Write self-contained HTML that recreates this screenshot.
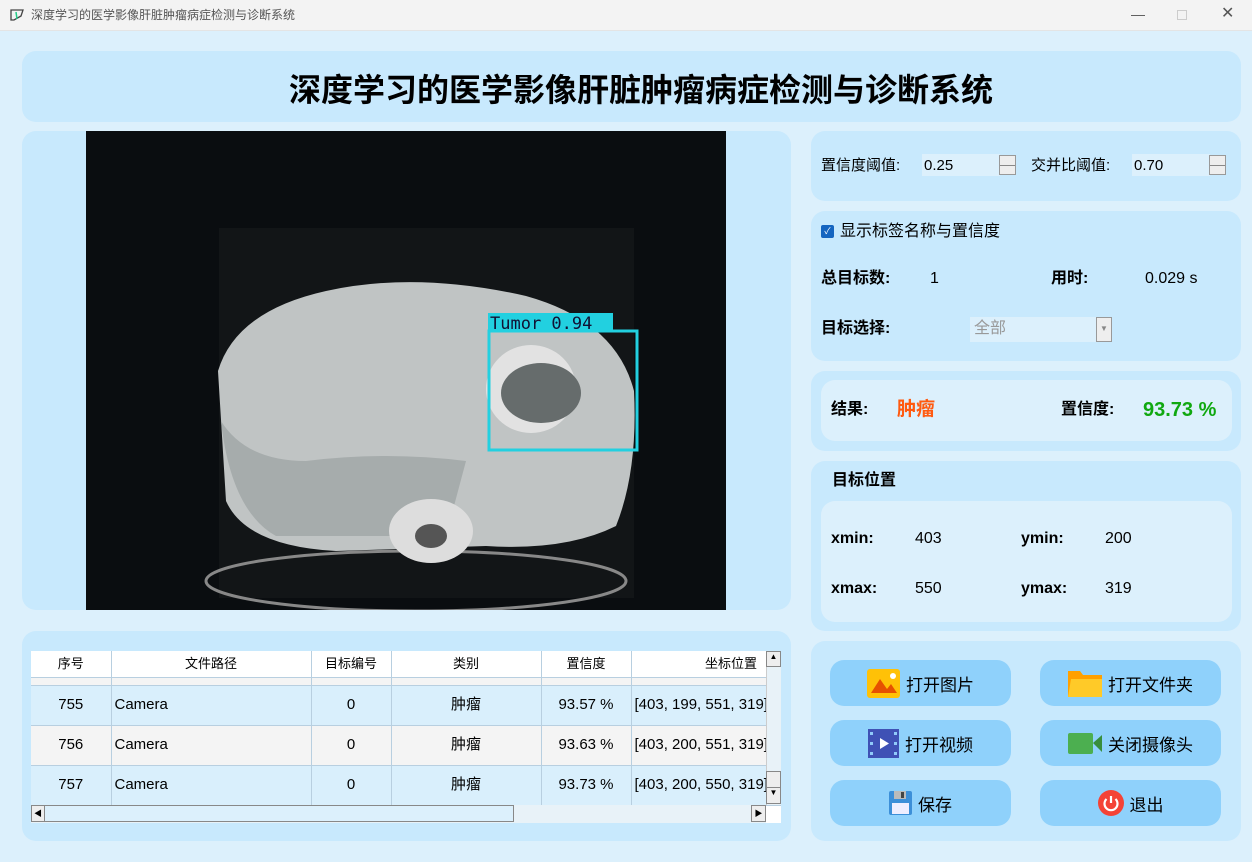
<!DOCTYPE html>
<html><head><meta charset="utf-8"><style>
*{margin:0;padding:0;box-sizing:border-box}
body{width:1252px;height:862px;background:#dcf0fc;font-family:"Liberation Sans","Noto Sans CJK SC",sans-serif;position:relative;overflow:hidden;color:#000}
.a{position:absolute}
.p{position:absolute;background:#c8e9fd;border-radius:14px}
.t{position:absolute;white-space:nowrap;line-height:20px;height:20px}
.b{font-weight:bold}
.btn{position:absolute;width:181px;height:46px;background:#8fd1fb;border-radius:14px;font-size:17px;display:flex;align-items:center;justify-content:center;gap:6px}
.spin{position:absolute;width:17px;height:20px;background:#eee;border:1px solid #999}
.spin:before{content:"";position:absolute;left:0;right:0;top:9px;border-top:1px solid #888}
td,th{border-right:1px solid #b8cfe0;border-bottom:1px solid #b8cfe0;font-size:15px;font-weight:normal;text-align:center;line-height:18px}
</style></head><body>
<div class="a" style="left:0;top:0;width:1252px;height:31px;background:#f3f3f3;border-bottom:1px solid #e4e4e4"></div>
<svg class="a" style="left:9px;top:8px" width="16" height="14"><path d="M2 2 L14 2 L12 8 L5 12 L2 12 Z" fill="none" stroke="#444" stroke-width="1.3"/><path d="M7 4 L8 11" stroke="#2c8" stroke-width="1.5"/></svg>
<div class="t" style="left:31px;top:5px;font-size:12px;color:#555">深度学习的医学影像肝脏肿瘤病症检测与诊断系统</div>
<div class="t" style="left:1131px;top:4px;font-size:14px;color:#555">—</div>
<div class="a" style="left:1177px;top:10px;width:10px;height:10px;border:1px solid #ccc"></div>
<div class="t" style="left:1221px;top:4px;font-size:16px;color:#555">✕</div>

<div class="p" style="left:22px;top:51px;width:1219px;height:71px"></div>
<div class="t b" style="left:0;width:1282px;text-align:center;top:70px;height:40px;line-height:40px;font-size:32px">深度学习的医学影像肝脏肿瘤病症检测与诊断系统</div>

<div class="p" style="left:22px;top:131px;width:769px;height:479px"></div>
<div class="a" style="left:86px;top:131px;width:640px;height:479px;background:#0a0d10;overflow:hidden">
<svg width="640" height="479">
<rect x="133" y="97" width="415" height="370" fill="#121517"/>
<ellipse cx="330" cy="450" rx="210" ry="30" fill="none" stroke="#888" stroke-width="3"/>
<path d="M132 240 Q150 180 240 160 Q330 140 440 165 Q530 190 548 260 Q552 340 530 395 Q480 420 400 415 L250 420 Q160 415 140 370 Z" fill="#c0c4c4"/>
<path d="M135 290 Q160 330 220 330 Q300 320 380 330 L360 405 L190 405 Q145 380 135 290Z" fill="#a6acac"/>
<ellipse cx="445" cy="258" rx="45" ry="44" fill="#e2e2e2"/>
<ellipse cx="455" cy="262" rx="40" ry="30" fill="#666c6c"/>
<ellipse cx="345" cy="400" rx="42" ry="32" fill="#ddd"/>
<ellipse cx="345" cy="405" rx="16" ry="12" fill="#555"/>
<rect x="403" y="200" width="148" height="119" fill="none" stroke="#22d0e0" stroke-width="3"/>
<rect x="402" y="182" width="125" height="19" fill="#22d0e0"/>
<text x="404" y="198" font-family="DejaVu Sans Mono,monospace" font-size="17" fill="#113">Tumor 0.94</text>
</svg></div>

<div class="p" style="left:22px;top:631px;width:769px;height:210px"></div>
<div class="a" style="left:31px;top:651px;width:750px;height:172px;background:#fff;overflow:hidden">
<table style="border-collapse:collapse;width:800px;table-layout:fixed">
<tr style="height:26px;background:#fff"><th style="width:80px;font-size:13px">序号</th><th style="width:200px;font-size:13px">文件路径</th><th style="width:80px;font-size:13px">目标编号</th><th style="width:150px;font-size:13px">类别</th><th style="width:90px;font-size:13px">置信度</th><th style="font-size:13px;border-right:none">坐标位置</th></tr>
<tr style="height:8px;background:#f4f4f4"><td></td><td></td><td></td><td></td><td></td><td></td></tr>
<tr style="height:40px;background:#d9effc"><td>755</td><td style="text-align:left;padding-left:3px">Camera</td><td>0</td><td>肿瘤</td><td>93.57 %</td><td style="text-align:left;padding-left:3px">[403, 199, 551, 319]</td></tr>
<tr style="height:40px;background:#f4f4f4"><td>756</td><td style="text-align:left;padding-left:3px">Camera</td><td>0</td><td>肿瘤</td><td>93.63 %</td><td style="text-align:left;padding-left:3px">[403, 200, 551, 319]</td></tr>
<tr style="height:40px;background:#d9effc"><td>757</td><td style="text-align:left;padding-left:3px">Camera</td><td>0</td><td>肿瘤</td><td>93.73 %</td><td style="text-align:left;padding-left:3px">[403, 200, 550, 319]</td></tr>
</table>
<div class="a" style="left:735px;top:0;width:15px;height:154px;background:#e8f2f8;border-left:1px solid #ccc"></div>
<div class="a" style="left:735px;top:0;width:15px;height:16px;background:#eee;border:1px solid #888;font-size:8px;text-align:center">▲</div>
<div class="a" style="left:735px;top:120px;width:15px;height:17px;background:#eee;border:1px solid #888"></div>
<div class="a" style="left:735px;top:136px;width:15px;height:17px;background:#eee;border:1px solid #888;font-size:8px;text-align:center">▼</div>
<div class="a" style="left:0;top:154px;width:735px;height:18px;background:#e8f2f8"></div>
<div class="a" style="left:0;top:154px;width:14px;height:17px;background:#eee;border:1px solid #888;font-size:8px;line-height:15px;text-align:center">◀</div>
<div class="a" style="left:13px;top:154px;width:470px;height:17px;background:#dcf0fc;border:1px solid #888"></div>
<div class="a" style="left:720px;top:154px;width:15px;height:17px;background:#eee;border:1px solid #888;font-size:8px;line-height:15px;text-align:center">▶</div>
</div>

<div class="p" style="left:811px;top:131px;width:430px;height:70px"></div>
<div class="t" style="left:821px;top:156px;font-size:15px">置信度阈值:</div>
<div class="a" style="left:922px;top:154px;width:78px;height:22px;background:#dcf0fc"></div>
<div class="t" style="left:924px;top:156px;font-size:15px">0.25</div>
<div class="spin" style="left:999px;top:155px"></div>
<div class="t" style="left:1031px;top:156px;font-size:15px">交并比阈值:</div>
<div class="a" style="left:1132px;top:154px;width:78px;height:22px;background:#dcf0fc"></div>
<div class="t" style="left:1134px;top:156px;font-size:15px">0.70</div>
<div class="spin" style="left:1209px;top:155px"></div>

<div class="p" style="left:811px;top:211px;width:430px;height:150px"></div>
<div class="a" style="left:821px;top:225px;width:13px;height:13px;background:#1565c0;border-radius:2px;color:#fff;font-size:9px;text-align:center;line-height:13px">✓</div>
<div class="t" style="left:840px;top:222px;font-size:16px">显示标签名称与置信度</div>
<div class="t b" style="left:821px;top:269px;font-size:16px">总目标数:</div>
<div class="t" style="left:930px;top:269px;font-size:16px">1</div>
<div class="t b" style="left:1051px;top:269px;font-size:16px">用时:</div>
<div class="t" style="left:1145px;top:269px;font-size:16px">0.029 s</div>
<div class="t b" style="left:821px;top:319px;font-size:16px">目标选择:</div>
<div class="a" style="left:970px;top:317px;width:126px;height:25px;background:#dcf0fc"></div>
<div class="t" style="left:974px;top:319px;font-size:16px;color:#999">全部</div>
<div class="a" style="left:1096px;top:317px;width:16px;height:25px;background:#eee;border:1px solid #999;font-size:8px;color:#888;text-align:center;line-height:22px">▼</div>

<div class="p" style="left:811px;top:371px;width:430px;height:80px"></div>
<div class="a" style="left:821px;top:380px;width:411px;height:61px;background:#dcf0fc;border-radius:14px"></div>
<div class="t b" style="left:831px;top:400px;font-size:16px">结果:</div>
<div class="t b" style="left:897px;top:400px;font-size:19px;color:#ff5a10">肿瘤</div>
<div class="t b" style="left:1061px;top:400px;font-size:16px">置信度:</div>
<div class="t b" style="left:1143px;top:400px;font-size:20px;color:#10a810">93.73 %</div>

<div class="p" style="left:811px;top:461px;width:430px;height:170px"></div>
<div class="t b" style="left:832px;top:471px;font-size:16px">目标位置</div>
<div class="a" style="left:821px;top:501px;width:411px;height:121px;background:#dcf0fc;border-radius:14px"></div>
<div class="t b" style="left:831px;top:529px;font-size:16px">xmin:</div>
<div class="t" style="left:915px;top:529px;font-size:16px">403</div>
<div class="t b" style="left:1021px;top:529px;font-size:16px">ymin:</div>
<div class="t" style="left:1105px;top:529px;font-size:16px">200</div>
<div class="t b" style="left:831px;top:579px;font-size:16px">xmax:</div>
<div class="t" style="left:915px;top:579px;font-size:16px">550</div>
<div class="t b" style="left:1021px;top:579px;font-size:16px">ymax:</div>
<div class="t" style="left:1105px;top:579px;font-size:16px">319</div>

<div class="p" style="left:811px;top:641px;width:430px;height:200px"></div>
<div class="btn" style="left:830px;top:660px"><svg width="33" height="29"><rect width="33" height="29" rx="3" fill="#ffc107"/><path d="M4 24 L13 10 L20 20 L24 15 L30 24Z" fill="#e65100"/><circle cx="26" cy="7" r="3" fill="#fff"/></svg>打开图片</div>
<div class="btn" style="left:1040px;top:660px"><svg width="34" height="28"><path d="M0 2 h12 l3 4 h19 v22 h-34z" fill="#ffa000"/><path d="M3 10 h31 v18 h-34z" fill="#ffca28"/></svg>打开文件夹</div>
<div class="btn" style="left:830px;top:720px"><svg width="31" height="29"><rect width="31" height="29" fill="#3f51b5"/><path d="M12 9 L21 14.5 L12 20Z" fill="#fff"/><g fill="#90caf9"><rect x="2" y="3" width="3" height="3"/><rect x="2" y="13" width="3" height="3"/><rect x="2" y="23" width="3" height="3"/><rect x="26" y="3" width="3" height="3"/><rect x="26" y="13" width="3" height="3"/><rect x="26" y="23" width="3" height="3"/></g></svg>打开视频</div>
<div class="btn" style="left:1040px;top:720px"><svg width="34" height="21"><rect width="25" height="21" rx="2" fill="#4caf50"/><path d="M25 10 L34 2 V19Z" fill="#388e3c"/></svg>关闭摄像头</div>
<div class="btn" style="left:830px;top:780px"><svg width="23" height="24"><rect width="23" height="24" rx="2" fill="#3c8fd8"/><rect x="5" y="0" width="12" height="8" fill="#bbb"/><rect x="12" y="1" width="3" height="6" fill="#444"/><rect x="3" y="12" width="17" height="11" fill="#eef"/></svg>保存</div>
<div class="btn" style="left:1040px;top:780px"><svg width="26" height="26"><circle cx="13" cy="13" r="13" fill="#f44336"/><path d="M8.5 9 A6.5 6.5 0 1 0 17.5 9" fill="none" stroke="#fff" stroke-width="2.2"/><path d="M13 6 V13" stroke="#fff" stroke-width="2.2"/></svg>退出</div>
</body></html>
